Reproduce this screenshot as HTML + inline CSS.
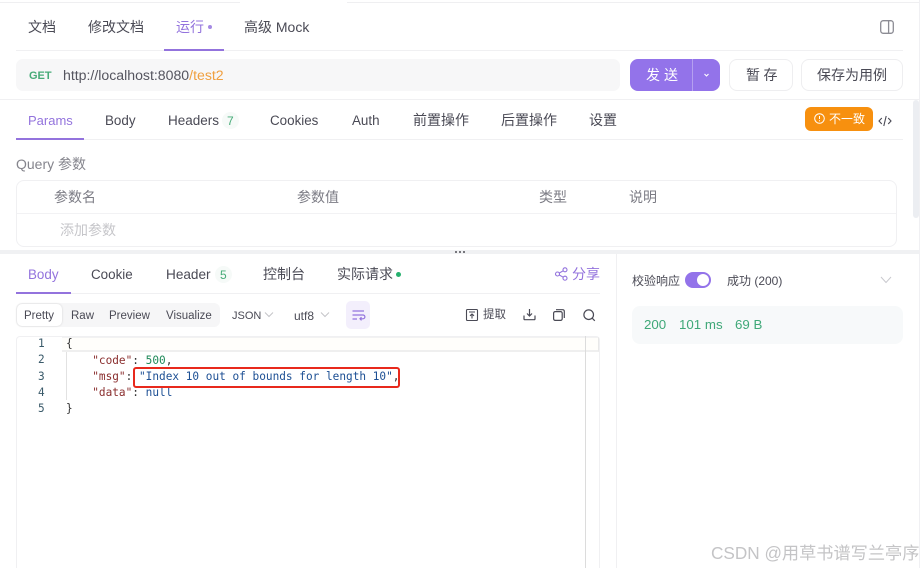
<!DOCTYPE html>
<html><head><meta charset="utf-8">
<style>
html,body{margin:0;padding:0;background:#fff;}
body{position:relative;width:923px;height:568px;overflow:hidden;font-family:"Liberation Sans","Noto Sans CJK SC",sans-serif;font-size:14px;color:#4a4a55;}
.a{position:absolute;}
.t{position:absolute;white-space:nowrap;line-height:18px;}
.l{font-size:13.4px;}
.m{font-family:"DejaVu Sans Mono","Liberation Mono",monospace;font-size:11.1px;line-height:16px;position:absolute;white-space:pre;}
svg{position:absolute;overflow:visible;}
</style></head><body>
<!-- top strip -->
<div class="a" style="left:0;top:2px;width:240px;height:1px;background:#efeff1"></div>
<div class="a" style="left:347px;top:2px;width:572px;height:1px;background:#efeff1"></div>
<div class="a" style="left:919px;top:0;width:1px;height:568px;background:#f0f0f3"></div>

<!-- main tabs -->
<div class="t" style="left:28px;top:18px">文档</div>
<div class="t" style="left:88px;top:18px">修改文档</div>
<div class="t" style="left:176px;top:18px;color:#9373dd">运行</div>
<div class="a" style="left:208px;top:25px;width:4px;height:4px;border-radius:50%;background:#a58ae3"></div>
<div class="t" style="left:244px;top:18px">高级 Mock</div>
<div class="a" style="left:16px;top:50px;width:887px;height:1px;background:#f0f0f2"></div>
<div class="a" style="left:164px;top:49px;width:60px;height:2px;background:#9373dd"></div>
<svg style="left:880px;top:20px" width="14" height="14" viewBox="0 0 14 14" fill="none" stroke="#8c8c94" stroke-width="1.3"><rect x=".7" y=".7" width="12.6" height="12.6" rx="2.5"/><path d="M8.6 1v12"/></svg>

<!-- URL bar -->
<div class="a" style="left:16px;top:59px;width:604px;height:32px;border-radius:7px;background:#f7f7f8"></div>
<div class="t" style="left:29px;top:67px;font-size:11px;font-weight:bold;color:#47ab78">GET</div>
<div class="t" style="left:63px;top:66px;font-size:14.1px;color:#55555f">http://localhost:8080<span style="color:#f0a040">/test2</span></div>
<div class="a" style="left:630px;top:59px;width:90px;height:32px;border-radius:8px;background:#9373ea"></div>
<div class="a" style="left:692px;top:59px;width:1px;height:32px;background:#b5a0f0"></div>
<div class="t" style="left:646px;top:66px;color:#fff;letter-spacing:4px">发送</div>
<svg style="left:703px;top:73px" width="7" height="5" viewBox="0 0 7 5" fill="none" stroke="#fff" stroke-width="1.1"><path d="M1.5 1l2 2 2-2"/></svg>
<div class="a" style="left:729px;top:59px;width:62px;height:30px;border:1px solid #eeeef0;border-radius:8px"></div>
<div class="t" style="left:746px;top:66px;letter-spacing:3.5px;color:#4a4a55">暂存</div>
<div class="a" style="left:801px;top:59px;width:100px;height:30px;border:1px solid #eeeef0;border-radius:8px"></div>
<div class="t" style="left:817px;top:66px">保存为用例</div>
<div class="a" style="left:0;top:99px;width:919px;height:1px;background:#f0f0f2"></div>

<!-- request tabs -->
<div class="t" style="left:28px;top:112px;font-size:13px;color:#9373dd">Params</div>
<div class="t l" style="left:105px;top:112px">Body</div>
<div class="t l" style="left:168px;top:112px;font-size:13.5px">Headers</div>
<div class="a" style="left:222px;top:112px;width:17px;height:17px;border-radius:50%;background:#f6faf8"></div>
<div class="t" style="left:227px;top:112px;font-size:12px;color:#47ab78">7</div>
<div class="t l" style="left:270px;top:112px">Cookies</div>
<div class="t l" style="left:352px;top:112px">Auth</div>
<div class="t" style="left:413px;top:111px">前置操作</div>
<div class="t" style="left:501px;top:111px">后置操作</div>
<div class="t" style="left:589px;top:111px">设置</div>
<div class="a" style="left:805px;top:107px;width:68px;height:24px;border-radius:6px;background:#f7900f"></div>
<svg style="left:814px;top:113px" width="11" height="11" viewBox="0 0 11 11" fill="none" stroke="#fff" stroke-width="1"><circle cx="5.5" cy="5.5" r="4.8"/><path d="M5.5 3v3M5.5 7.2v1"/></svg>
<div class="t" style="left:829px;top:110px;font-size:12px;color:#fff">不一致</div>
<svg style="left:878px;top:115px" width="14" height="12" viewBox="0 0 14 12" fill="none" stroke="#4a4a55" stroke-width="1.1"><path d="M3.8 3L1 6l2.8 3M10.2 3L13 6l-2.8 3M8.2 1L5.8 11"/></svg>
<div class="a" style="left:16px;top:139px;width:887px;height:1px;background:#f0f0f2"></div>
<div class="a" style="left:16px;top:138px;width:68px;height:2px;background:#9373dd"></div>
<div class="a" style="left:913px;top:100px;width:6px;height:118px;border-radius:3px;background:#eceef2"></div>

<!-- query -->
<div class="t" style="left:16px;top:155px;color:#85858d">Query 参数</div>
<div class="a" style="left:16px;top:180px;width:879px;height:65px;border:1px solid #f0f0f2;border-radius:8px"></div>
<div class="a" style="left:17px;top:213px;width:879px;height:1px;background:#f2f2f4"></div>
<div class="t" style="left:54px;top:188px;color:#7c7c85">参数名</div>
<div class="t" style="left:297px;top:188px;color:#7c7c85">参数值</div>
<div class="t" style="left:539px;top:188px;color:#7c7c85">类型</div>
<div class="t" style="left:629px;top:188px;color:#7c7c85">说明</div>
<div class="t" style="left:60px;top:221px;color:#c6c6ca">添加参数</div>

<!-- splitter -->
<div class="a" style="left:0;top:250px;width:919px;height:4px;background:#f0f1f3"></div>
<div class="a" style="left:455px;top:251px;width:2px;height:2px;background:#77777d;box-shadow:4px 0 #77777d,8px 0 #77777d"></div>

<!-- response tabs -->
<div class="t l" style="left:28px;top:266px;color:#9373dd">Body</div>
<div class="t l" style="left:91px;top:266px">Cookie</div>
<div class="t" style="left:166px;top:266px;font-size:13.6px">Header</div>
<div class="a" style="left:215px;top:266px;width:17px;height:17px;border-radius:50%;background:#f6faf8"></div>
<div class="t" style="left:220px;top:266px;font-size:12px;color:#47ab78">5</div>
<div class="t" style="left:263px;top:265px">控制台</div>
<div class="t" style="left:337px;top:265px">实际请求</div>
<div class="a" style="left:396px;top:272px;width:5px;height:5px;border-radius:50%;background:#26b06e"></div>
<svg style="left:555px;top:267px" width="13" height="14" viewBox="0 0 13 14" fill="none" stroke="#9373dd" stroke-width="1.1"><circle cx="2.5" cy="7" r="2"/><circle cx="10" cy="2.8" r="2"/><circle cx="10" cy="11.2" r="2"/><path d="M4.3 6l3.9-2.2M4.3 8l3.9 2.2"/></svg>
<div class="t" style="left:572px;top:265px;color:#9373dd">分享</div>
<div class="a" style="left:16px;top:293px;width:584px;height:1px;background:#f0f0f2"></div>
<div class="a" style="left:16px;top:292px;width:55px;height:2px;background:#9373dd"></div>
<div class="a" style="left:616px;top:254px;width:1px;height:314px;background:#f0f0f2"></div>

<!-- toolbar -->
<div class="a" style="left:16px;top:303px;width:204px;height:24px;border-radius:6px;background:#f6f6f7"></div>
<div class="a" style="left:17px;top:304px;width:45px;height:22px;border-radius:5px;background:#fff;box-shadow:0 0 2px rgba(0,0,0,.15)"></div>
<div class="t" style="left:24px;top:307px;font-size:11.5px">Pretty</div>
<div class="t" style="left:71px;top:307px;font-size:11.5px">Raw</div>
<div class="t" style="left:109px;top:307px;font-size:11.5px">Preview</div>
<div class="t" style="left:166px;top:307px;font-size:11.5px">Visualize</div>
<div class="t" style="left:232px;top:307px;font-size:11px">JSON</div>
<svg style="left:264px;top:312px" width="10" height="6" viewBox="0 0 10 6" fill="none" stroke="#c4c4c8"><path d="M1 .5l4 4 4-4"/></svg>
<div class="t" style="left:294px;top:307px;font-size:12px">utf8</div>
<svg style="left:320px;top:312px" width="10" height="6" viewBox="0 0 10 6" fill="none" stroke="#c4c4c8"><path d="M1 .5l4 4 4-4"/></svg>
<div class="a" style="left:346px;top:301px;width:24px;height:28px;border-radius:5px;background:#f3effc"></div>
<svg style="left:352px;top:310px" width="13" height="11" viewBox="0 0 13 11" fill="none" stroke="#9373dd" stroke-width="1.2"><path d="M.5 1h11.5M.5 5h10.5a1.8 1.8 0 0 1 0 3.8H8M9.5 7.2L8 8.8l1.5 1.6M.5 9h4.5"/></svg>
<svg style="left:466px;top:309px" width="12" height="12" viewBox="0 0 12 12" fill="none" stroke="#4a4a55" stroke-width="1.1"><rect x=".5" y=".5" width="11" height="11" rx="1"/><path d="M3 3h6M6 9.5V5M4 6.8L6 5l2 1.8"/></svg>
<div class="t" style="left:483px;top:306px;font-size:11.5px">提取</div>
<svg style="left:523px;top:308px" width="13" height="13" viewBox="0 0 13 13" fill="none" stroke="#4a4a55" stroke-width="1.2"><path d="M6.5 1v7M4 5.5l2.5 2.5L9 5.5M1 7.5v3.2c0 .6.4 1 1 1h9c.6 0 1-.4 1-1V7.5"/></svg>
<svg style="left:553px;top:309px" width="12" height="12" viewBox="0 0 12 12" fill="none" stroke="#4a4a55" stroke-width="1.2"><rect x=".6" y="2.6" width="8.6" height="8.8" rx="1.6"/><path d="M3 .7h6.6c1 0 1.7.7 1.7 1.7V9"/></svg>
<svg style="left:583px;top:309px" width="13" height="13" viewBox="0 0 13 13" fill="none" stroke="#4a4a55" stroke-width="1.2"><circle cx="5.7" cy="5.7" r="4.8"/><path d="M9.2 9.2l2.6 2.6"/></svg>

<!-- code editor -->
<div class="a" style="left:16px;top:336px;width:584px;height:232px;border-left:1px solid #f0f0f2;border-right:1px solid #f0f0f2;border-top:1px solid #f0f0f2;box-sizing:border-box;border-radius:4px 4px 0 0"></div>
<div class="a" style="left:62px;top:337px;width:537px;height:15px;background:#fffefb;border-bottom:2px solid #efefef;border-top:1px solid #f2f2f2;border-right:1px solid #e8e8e8;box-sizing:border-box"></div>
<div class="a" style="left:585px;top:336px;width:1px;height:232px;background:#dcdcdc"></div>
<div class="a" style="left:66px;top:352px;width:1px;height:48px;background:#e2e2e2"></div>
<div class="m" style="left:38px;top:336px;color:#3a5a6a">1</div>
<div class="m" style="left:38px;top:352px;color:#3a5a6a">2</div>
<div class="m" style="left:38px;top:369px;color:#3a5a6a">3</div>
<div class="m" style="left:38px;top:385px;color:#3a5a6a">4</div>
<div class="m" style="left:38px;top:401px;color:#3a5a6a">5</div>
<div class="m" style="left:66px;top:336px;color:#333">{</div>
<div class="m" style="left:65.5px;top:353px;color:#333">    <span style="color:#8a2e2e">"code"</span>: <span style="color:#1f8a5a">500</span>,</div>
<div class="m" style="left:65.5px;top:369px;color:#333">    <span style="color:#8a2e2e">"msg"</span>: <span style="color:#1c4f94">"Index 10 out of bounds for length 10"</span>,</div>
<div class="m" style="left:65.5px;top:385px;color:#333">    <span style="color:#8a2e2e">"data"</span>: <span style="color:#1c4f94">null</span></div>
<div class="m" style="left:66px;top:401px;color:#333">}</div>
<div class="a" style="left:133px;top:367px;width:263px;height:17px;border:2px solid #e8291c;border-radius:3px"></div>

<!-- right panel -->
<div class="t" style="left:632px;top:272px;font-size:12px">校验响应</div>
<div class="a" style="left:685px;top:272px;width:26px;height:16px;border-radius:8px;background:#9373ea"></div>
<div class="a" style="left:697px;top:274px;width:12px;height:12px;border-radius:50%;background:#fff"></div>
<div class="t" style="left:727px;top:272px;font-size:12px">成功 (200)</div>
<svg style="left:880px;top:276px" width="12" height="8" viewBox="0 0 12 8" fill="none" stroke="#c9c9ce"><path d="M1 1l5 5.5L11 1"/></svg>
<div class="a" style="left:632px;top:306px;width:271px;height:38px;border-radius:8px;background:#f7f9fa"></div>
<div class="t" style="left:644px;top:316px;color:#3fa878;font-size:13.3px">200</div>
<div class="t" style="left:679px;top:316px;color:#3fa878;font-size:13.3px">101 ms</div>
<div class="t" style="left:735px;top:316px;color:#3fa878;font-size:13.3px">69 B</div>

<!-- watermark -->
<div class="t" style="left:711px;top:543px;font-size:17.2px;line-height:20px;color:#c4c4c6">CSDN @用草书谱写兰亭序</div>
</body></html>
